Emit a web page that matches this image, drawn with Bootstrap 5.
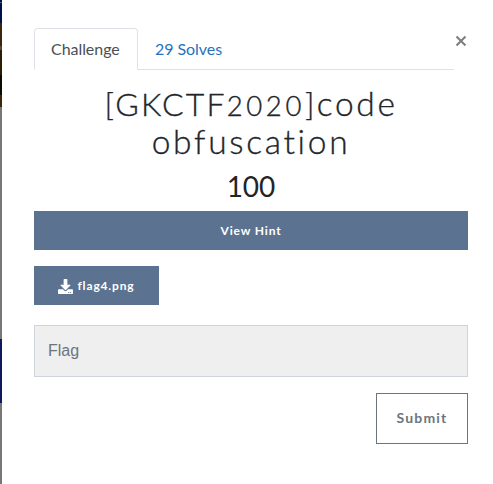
<!DOCTYPE html>
<html lang="en">
<head>
<meta charset="utf-8">
<meta name="viewport" content="width=device-width, initial-scale=1">
<title>Challenge</title>
<link href="https://cdn.jsdelivr.net/npm/bootstrap@5.3.0/dist/css/bootstrap.min.css" rel="stylesheet">
<style>
body { font-family: Lato, sans-serif; color: #212529; height: 484px; overflow: hidden; }
.backdrop-strip { width: 2px; background: linear-gradient(#00104a 0 2px, #53616f 2px 3px, #001048 3px 23px, #3a2608 23px 46px, #4d4a45 46px 50px, #2e1d04 50px 75px, #0d0a04 75px 95px, #3b2809 95px 107px, #777 107px 339px, #10195c 339px 403px, #777 403px); }
.dialog-pane { padding: 28px 25px 0 32px; }
.tab-row { width: 420px; }
.tab-row .nav-link { line-height: 24px; letter-spacing: -.05px; border-radius: 4px 4px 0 0; color: #2373bc; }
.tab-row .nav-link.active { color: #495057; width: 104px; }
.dismiss { width: 12px; height: 12px; margin: 7px 1px 0 0; }
.challenge-title { font-size: 32px; line-height: 38.4px; font-weight: 300; letter-spacing: 2.2px; margin: 15px 0 8px; -webkit-text-stroke: .35px #212529; }
.old-digits { font-size: .86em; line-height: 0; letter-spacing: 3.6px; }
.wide-lower { font-size: 33.5px; line-height: 0; letter-spacing: 2.7px; }
.points { font-size: 28px; line-height: 33.6px; font-weight: 400; margin-bottom: 7.6px; }
.slate { background: #5b7290; color: #fff; height: 39px; font-size: 12px; font-weight: 700; letter-spacing: .85px; padding-top: 7px; padding-bottom: 6px; }
.slate:hover { background: #4d627d; color: #fff; }
.file-link { width: 125px; margin: 16px 0 20px; }
.flag-input { height: 52px; background: #efefef; border-color: #ced4da; padding: 0 13px; font-family: "Liberation Sans", Arial, sans-serif; font-size: 16px; }
.flag-input::placeholder { color: #6c757d; opacity: 1; }
.send { width: 92px; height: 51px; margin-top: 16px; font-size: 14px; font-weight: 700; letter-spacing: 1.15px; padding: 0 0 2px; }
</style>
</head>
<body class="d-flex bg-white">
<div class="backdrop-strip flex-shrink-0"></div>
<main class="dialog-pane flex-grow-1">
  <div class="d-flex justify-content-between align-items-start">
    <ul class="nav nav-tabs tab-row">
      <li class="nav-item"><a class="nav-link active" href="#">Challenge</a></li>
      <li class="nav-item"><a class="nav-link" href="#">29 Solves</a></li>
    </ul>
    <button type="button" class="btn p-0 border-0 dismiss d-flex" aria-label="Close">
      <svg width="12" height="12" viewBox="0 0 12 12"><path d="M1.5 1.5 10.5 10.5M10.5 1.5 1.5 10.5" stroke="#7f7f7f" stroke-width="2.1" fill="none"/></svg>
    </button>
  </div>
  <h2 class="challenge-title text-center">[GKCTF<span class="old-digits">2020</span>]<span class="wide-lower">code<br>obfuscation</span></h2>
  <h3 class="points text-center">100</h3>
  <a class="btn slate w-100 rounded-0 border-0 d-flex align-items-center justify-content-center" href="#">View Hint</a>
  <a class="btn slate file-link rounded-0 border-0 px-0 d-flex align-items-center justify-content-center" href="#">
    <svg class="me-1" width="15" height="15" viewBox="0 0 512 512" fill="#fff"><path d="M216 0h80c13 0 24 11 24 24v168h88c18 0 27 21 14 34L270 378c-7 7-20 7-27 0L90 226c-12-13-3-34 15-34h87V24c0-13 11-24 24-24zm296 376v112c0 13-11 24-24 24H24c-13 0-24-11-24-24V376c0-13 11-24 24-24h146l49 49c20 20 53 20 74 0l49-49h146c13 0 24 11 24 24z"/><path fill="#5b7290" d="M348 464a20 20 0 1 0 40 0 20 20 0 0 0-40 0zm64 0a20 20 0 1 0 40 0 20 20 0 0 0-40 0z"/></svg>flag4.png</a>
  <input class="form-control flag-input rounded-0" type="text" placeholder="Flag" aria-label="Flag">
  <div class="d-flex justify-content-end">
    <button type="button" class="btn btn-outline-secondary rounded-0 send">Submit</button>
  </div>
</main>
<script src="https://cdn.jsdelivr.net/npm/bootstrap@5.3.0/dist/js/bootstrap.bundle.min.js"></script>
</body>
</html>
